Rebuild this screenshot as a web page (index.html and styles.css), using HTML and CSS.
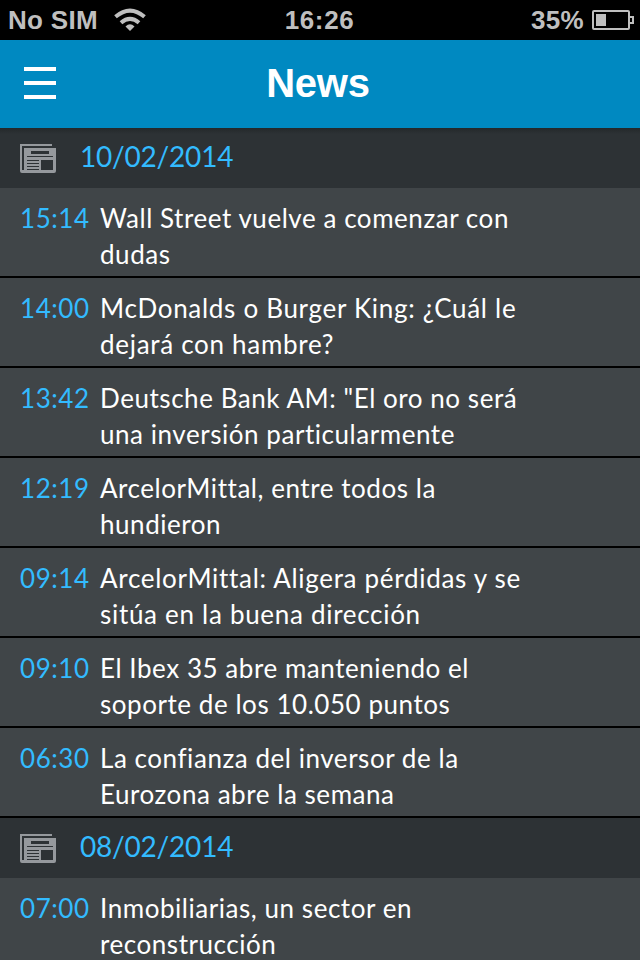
FILE: index.html
```html
<!DOCTYPE html>
<html lang="es">
<head>
    <meta charset="UTF-8">
    <meta name="viewport" content="width=device-width, initial-scale=1.0">
    <title>News</title>
    <link rel="stylesheet" href="styles.css">
</head>
<body>
    <!-- newspaper icon, used by every date header -->
    <svg class="defs" width="0" height="0">
        <symbol id="newspaper" viewBox="0 0 36 30">
            <path fill="#95999d" fill-rule="evenodd" d="M0 0H32V2H2V26H4V4H36V27Q36 29 34 29H2Q0 29 0 27ZM11 7V10H29V7ZM7 12V13H33V12ZM7 16V17H19V16ZM7 19V20H19V19ZM7 22V23H19V22ZM7 25V26H19V25ZM21 16V26H33V16Z"/>
        </symbol>
    </svg>

    <div class="status-bar">
        <div class="carrier">
            <span>No SIM</span>
            <svg class="wifi" width="32" height="24" viewBox="0 0 32 24">
                <path d="M1.500 8.800Q16 -3.500 30.500 8.800" fill="none" stroke="#bfbfbf" stroke-width="4"/>
                <path d="M7 14.800Q16 7 25 14.800" fill="none" stroke="#bfbfbf" stroke-width="4"/>
                <path d="M11.500 18.500Q16 14 20.500 18.500L16 23Z" fill="#bfbfbf"/>
            </svg>
        </div>
        <div class="clock">16:26</div>
        <div class="battery">
            <span>35%</span>
            <svg width="42" height="20" viewBox="0 0 42 20">
                <rect x="1" y="1" width="36" height="18" rx="1" fill="none" stroke="#bfbfbf" stroke-width="2"/>
                <rect x="4" y="4" width="10" height="12" fill="#bfbfbf"/>
                <path d="M38 7H41V13H38" fill="none" stroke="#bfbfbf" stroke-width="2"/>
            </svg>
        </div>
    </div>

    <header>
        <button class="menu-button" aria-label="Menu">
            <span></span>
            <span></span>
            <span></span>
        </button>
        <h1>News</h1>
    </header>

    <div class="news">
        <h2 class="date first"><svg class="icon"><use href="#newspaper"/></svg>10/02/2014</h2>
        <div class="item">
            <span class="time">15:14</span>
            <p>Wall Street vuelve a comenzar con<br>dudas</p>
        </div>
        <div class="item">
            <span class="time">14:00</span>
            <p class="wide">McDonalds o Burger King: ¿Cuál le<br>dejará con hambre?</p>
        </div>
        <div class="item">
            <span class="time">13:42</span>
            <p>Deutsche Bank AM: "El oro no será<br>una inversión particularmente</p>
        </div>
        <div class="item">
            <span class="time">12:19</span>
            <p>ArcelorMittal, entre todos la<br>hundieron</p>
        </div>
        <div class="item">
            <span class="time">09:14</span>
            <p class="wide">ArcelorMittal: Aligera pérdidas y se<br>sitúa en la buena dirección</p>
        </div>
        <div class="item">
            <span class="time">09:10</span>
            <p>El Ibex 35 abre manteniendo el<br>soporte de los 10.050 puntos</p>
        </div>
        <div class="item">
            <span class="time">06:30</span>
            <p>La confianza del inversor de la<br>Eurozona abre la semana</p>
        </div>
        <h2 class="date"><svg class="icon"><use href="#newspaper"/></svg>08/02/2014</h2>
        <div class="item">
            <span class="time">07:00</span>
            <p>Inmobiliarias, un sector en<br>reconstrucción</p>
        </div>
    </div>
</body>
</html>
```
FILE: styles.css
```css
        body {
            background-color: #404548;
            font-family: Lato, "Liberation Sans", sans-serif;
            margin: 0;
            height: 960px;
            overflow: hidden;
        }

        .defs {
            display: block;
        }

        /* status bar */
        .status-bar {
            display: grid;
            grid-template-columns: 1fr auto 1fr;
            align-items: center;
            height: 40px;
            padding: 0 6px 0 8px;
            background-color: #000;
            color: #bfbfbf;
            font-family: "Liberation Sans", Arial, sans-serif;
            font-size: 26px;
            font-weight: bold;
            box-sizing: border-box;
        }

        .carrier {
            display: flex;
            align-items: center;
            gap: 16px;
            letter-spacing: 0.3px;
        }

        .clock {
            letter-spacing: 0.6px;
            margin-right: 3px;
        }

        .battery {
            display: flex;
            align-items: center;
            justify-content: flex-end;
            gap: 8px;
            letter-spacing: 0.3px;
        }

        header {
            display: grid;
            grid-template-columns: 80px 1fr 80px;
            align-items: center;
            height: 88px;
            padding-bottom: 2px;
            background-color: #0089c1;
            color: #fff;
            box-sizing: border-box;
        }

        .menu-button {
            display: flex;
            flex-direction: column;
            gap: 10px;
            width: 32px;
            margin: 0 0 0 24px;
            padding: 0;
            background: none;
            border: none;
        }

        .menu-button span {
            height: 4px;
            background-color: #fff;
        }

        h1 {
            margin: 0 4px 0 0;
            font-family: "Liberation Sans", Arial, sans-serif;
            font-size: 40px;
            font-weight: bold;
            letter-spacing: -0.2px;
            text-align: center;
        }

        /* news list */
        .date {
            display: flex;
            align-items: center;
            gap: 24px;
            height: 60px;
            margin: 0;
            padding: 0 20px 4px;
            background-color: #2d3235;
            color: #33bbff;
            font-size: 28px;
            font-weight: normal;
            letter-spacing: -0.2px;
            box-sizing: border-box;
        }

        .date.first {
            background-image: linear-gradient(#24282a, #2d3235 6px);
        }

        .icon {
            width: 36px;
            height: 30px;
            margin-top: 6px;
        }

        .item {
            display: flex;
            height: 90px;
            padding: 12px 20px 0;
            border-bottom: 2px solid #000;
            background-color: #404548;
            font-size: 26px;
            line-height: 36px;
            letter-spacing: 0.55px;
            box-sizing: border-box;
        }

        .time {
            width: 80px;
            color: #33bbff;
        }

        .item p {
            margin: 0;
            color: #fff;
            white-space: nowrap;
        }

        .item .wide {
            letter-spacing: 0.7px;
        }
```
